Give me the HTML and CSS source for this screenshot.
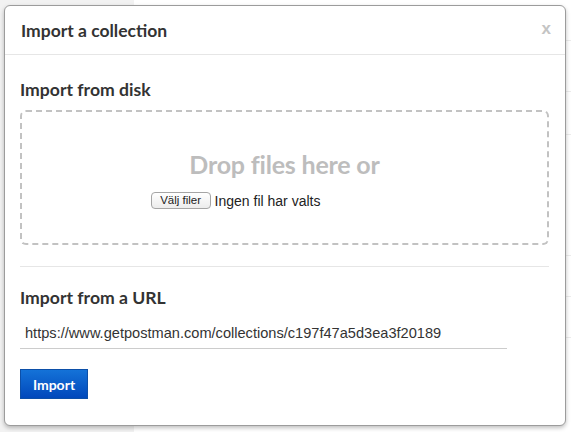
FILE: index.html
```html
<!DOCTYPE html>
<html lang="sv">
<head>
<meta charset="utf-8">
<title>Import a collection</title>
<link rel="stylesheet" href="styles.css">
</head>
<body>
<div class="backdrop">
  <div class="side"></div>
  <div class="main">
    <div class="bg-line l1"></div>
    <div class="bg-line l2"></div>
    <div class="bg-line l3"></div>
    <div class="bg-line l4"></div>
    <div class="bg-line l5"></div>
    <div class="bg-line l6"></div>
  </div>
</div>
<div class="modal">
  <div class="modal-header">
    <h2 class="modal-title">Import a collection</h2>
    <span class="close">x</span>
  </div>
  <div class="modal-body">
    <h3 class="section-title first">Import from disk</h3>
    <div class="dropzone">
      <div class="drop-text">Drop files here or</div>
      <div class="file-input">
        <span class="file-btn">Välj filer</span>
        <span class="file-label">Ingen fil har valts</span>
      </div>
    </div>
    <div class="divider"></div>
    <h3 class="section-title">Import from a URL</h3>
    <input class="url-input" type="text" value="https://www.getpostman.com/collections/c197f47a5d3ea3f20189">
    <button class="import-btn">Import</button>
  </div>
</div>
</body>
</html>
```
FILE: styles.css
```css
html, body {
  margin: 0;
  padding: 0;
  width: 571px;
  height: 432px;
  overflow: hidden;
  font-family: "Lato", "Open Sans", sans-serif;
}

.backdrop {
  display: grid;
  grid-template-columns: 134px 1fr;
  height: 432px;
}

.side {
  background: #f2f2f2;
}

.main {
  background: #ffffff;
  display: flex;
  flex-direction: column;
}

.bg-line {
  border-bottom: 1px solid #ececec;
}
.l1 { height: 40px; }
.l2 { height: 50px; }
.l3 { height: 42px; }
.l4 { height: 120px; }
.l5 { height: 40px; }
.l6 { height: 40px; }

.modal {
  position: absolute;
  left: 4px;
  top: 5px;
  width: 560px;
  height: 419px;
  background: #ffffff;
  border: 1px solid #9c9c9c;
  border-radius: 6px;
  box-shadow: 0 2px 4px rgba(0, 0, 0, 0.25);
}

.modal-header {
  height: 48px;
  border-bottom: 1px solid #e6e6e6;
  display: flex;
  align-items: center;
  justify-content: space-between;
  padding: 0 16px;
}

.modal-title {
  margin: 0;
  font-size: 17.5px;
  font-weight: 700;
  color: #333333;
}

.close {
  font-family: "Liberation Sans", sans-serif;
  font-size: 17px;
  font-weight: 700;
  color: #c4c4c4;
  margin-right: -2px;
  margin-top: -2px;
}

.modal-body {
  padding: 0 16px 0 15px;
}

.section-title {
  margin: 0;
  font-size: 17.6px;
  line-height: 20px;
  font-weight: 700;
  color: #333333;
}

.section-title.first {
  margin-top: 25px;
}

.dropzone {
  margin-top: 10px;
  height: 131px;
  border: 2px dashed #c2c2c2;
  border-radius: 6px;
  display: flex;
  flex-direction: column;
  align-items: center;
}

.drop-text {
  margin-top: 37px;
  font-size: 25px;
  line-height: 30px;
  font-weight: 700;
  color: #bdbdbd;
  letter-spacing: -0.2px;
}

.file-input {
  margin-top: 13px;
  margin-left: -98px;
  display: flex;
  align-items: center;
  gap: 4px;
  font-family: "Liberation Sans", sans-serif;
}

.file-btn {
  display: inline-block;
  box-sizing: border-box;
  width: 60px;
  height: 17px;
  line-height: 15px;
  text-align: center;
  font-size: 11.5px;
  color: #222222;
  border: 1px solid #a5a5a5;
  border-radius: 4px;
  background: linear-gradient(#ffffff, #ececec);
}

.file-label {
  font-size: 14px;
  color: #222222;
}

.divider {
  margin-top: 21px;
  border-top: 1px solid #e6e6e6;
}

.section-title:not(.first) {
  margin-top: 21px;
}

.url-input {
  display: block;
  box-sizing: border-box;
  margin-top: 12px;
  width: 487px;
  height: 29px;
  padding: 0 5px 3px;
  border: none;
  border-bottom: 1px solid #cccccc;
  font-family: "Liberation Sans", sans-serif;
  font-size: 14.6px;
  color: #333333;
  outline: none;
  background: transparent;
}

.import-btn {
  display: block;
  margin-top: 20px;
  width: 68px;
  height: 30px;
  border: 1px solid #0c4fa8;
  border-radius: 0;
  background: linear-gradient(#1472d8, #0148bb);
  color: #ffffff;
  font-family: "Lato", sans-serif;
  font-size: 14px;
  font-weight: 700;
  padding: 0;
}
```
